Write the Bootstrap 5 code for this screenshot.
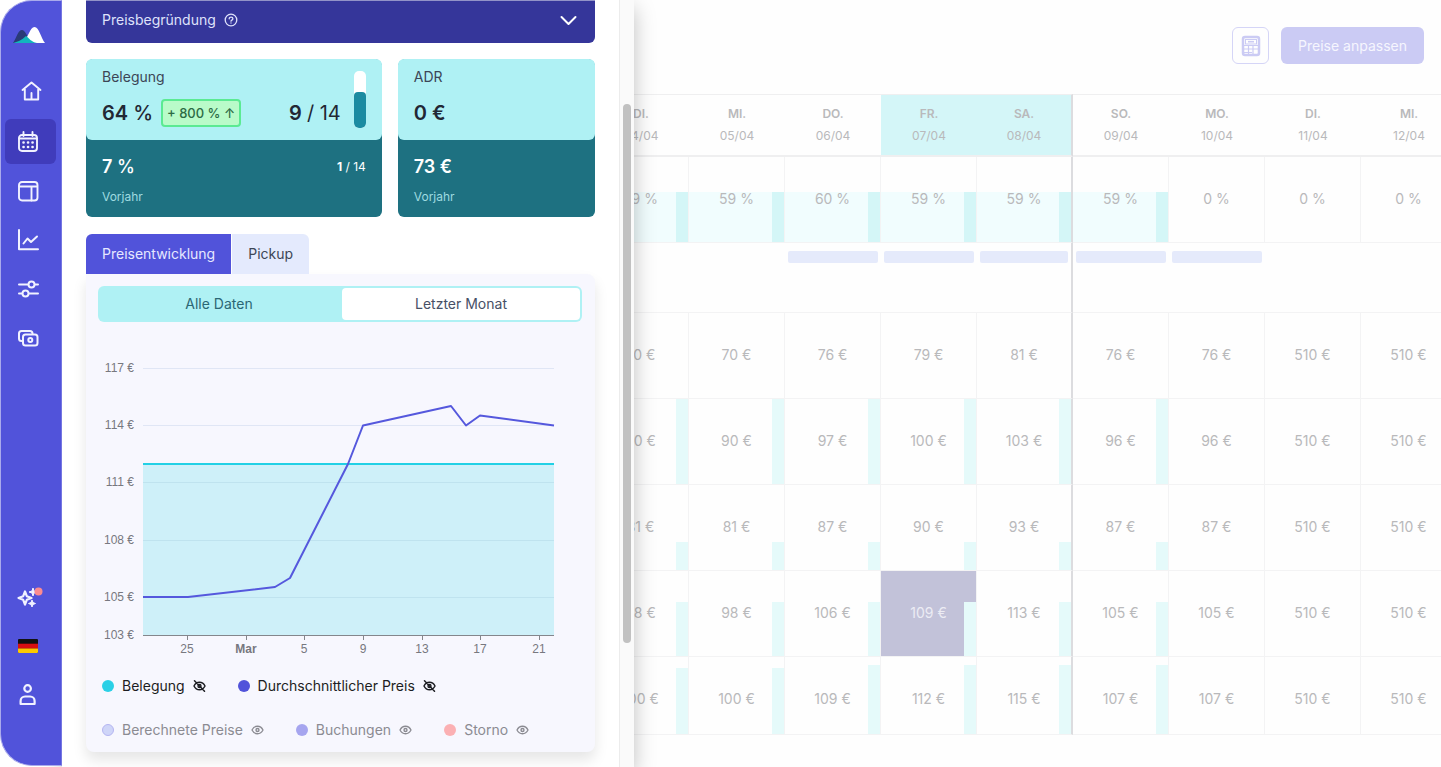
<!DOCTYPE html>
<html lang="de">
<head>
<meta charset="utf-8">
<meta name="viewport" content="width=device-width, initial-scale=1">
<title>Preiskalender</title>
<link href="https://cdn.jsdelivr.net/npm/bootstrap@5.3.0/dist/css/bootstrap.min.css" rel="stylesheet">
<style>
:root { --indigo: #5153da; --aqua: #aff1f4; --petrol: #1e7181; --line: #f3f3f4; }
body { font-family: Inter, "Liberation Sans", sans-serif; font-size: 14px; line-height: 20px; background: #fff; color: #343a46; }
.app { height: 100vh; }

/* Icon rail */
.rail { position: relative; z-index: 3; flex: 0 0 62px; background: var(--indigo); border: 1px solid #a9aaec; border-right-color: #7576e2; border-radius: 32px 0 0 32px; padding: 24px 5px 48px 4px; margin-bottom: 1px; }
.rail a { display: flex; align-items: center; height: 45px; padding-left: 13px; border-radius: 6px; color: #f1f2ff; }
.rail a.active { background: #403cbb; }
.rail .logo { height: 20px; padding-left: 8px; margin-bottom: 25px; }
.rail svg { overflow: visible; }
.stroke { fill: none; stroke: currentColor; stroke-width: 2; stroke-linecap: round; stroke-linejoin: round; }

/* Drawer */
.drawer { flex: 0 0 572px; z-index: 2; background: #fff; box-shadow: 0 8px 20px rgba(0,0,0,.25); }
.drawer-body { padding: 0 24px; gap: 16px; min-width: 0; }
.scroll-track { flex: 0 0 15px; display: grid; grid-template-rows: 104fr 539fr 124fr; padding: 0 3px; background: #fafafa; border-left: 1px solid #ececec; }
.scroll-thumb { grid-row: 2; background: #c1c1c1; border-radius: 4px; }
.reason { height: 43px; padding: 0 16px 5px; background: #35369a; color: #dfe2fb; border: 0; border-top: 1px solid #9293c8; border-radius: 0 0 6px 6px; font-size: 14px; }
.stat { background: var(--petrol); border-radius: 8px 8px 6px 6px; color: #fff; }
.stat-wide { flex: 3 1 0; }
.stat-slim { flex: 2 1 0; }
.stat-now { background: var(--aqua); color: #222834; border-radius: 6px; height: 81px; padding: 8px 16px; }
.stat-prev { height: 77px; padding: 15px 16px 8px; }
.stat-title { color: #3c4656; }
.big { font-size: 20px; line-height: 28px; font-weight: 600; }
.mid { font-size: 18px; line-height: 24px; font-weight: 600; }
.unit { font-weight: 500; }
.note { font-size: 12px; line-height: 16px; }
.stat-prev .note-soft { color: #9fdbe0; margin-top: 10px; }
.delta { border: 2px solid #5bea92; background: #b9fbc9; color: #2c6b45; border-radius: 4px; padding: 2px 4px; margin-left: 8px; font-size: 13px; line-height: 20px; font-weight: 500; }
.gauge { width: 12px; height: 57px; border-radius: 5px; background: #fff; overflow: hidden; margin-left: 13px; }
.gauge div { background: #1b8ba1; border-radius: 4px; }
.tabs { gap: 1px; padding-top: 1px; }
.tabs button { border: 0; height: 40px; font-size: 14px; padding: 0 16px; background: #e4eafd; color: #3c4656; border-radius: 0 6px 0 0; }
.tabs button.active { background: var(--indigo); color: #e6e8ff; border-radius: 6px 0 0 0; }
.panel-box { background: #f7f7fe; border-radius: 0 8px 8px 8px; padding: 12px 12px 0; box-shadow: 0 8px 14px rgba(0,0,0,.1); }
.range { background: var(--aqua); border-radius: 6px; padding: 2px; gap: 4px; height: 36px; margin-right: 1px; }
.range button { flex: 1 1 0; border: 0; background: none; color: #2b6774; border-radius: 4px; font-size: 14px; }
.range button.active { background: #fff; color: #475066; }
.chart { display: block; width: 100%; margin-top: 18px; }
.chart text { font-family: "Liberation Sans", sans-serif; font-size: 12px; fill: #77787f; }
.legend-row { gap: 32px; padding-left: 4px; height: 44px; }
.legend-row button { display: flex; align-items: center; gap: 8px; padding: 0; border: 0; background: none; font-size: 14px; color: #1c1d22; }
.legend-row.off button { color: #8b8b92; }
.dot { width: 12px; height: 12px; border-radius: 50%; }
.dot-occ { background: #2bd0e6; }
.dot-avg { background: #5153da; }
.dot-calc { background: #cfd5f8; border: 1px solid #b5b5f2; }
.dot-book { background: #a6a5ef; }
.dot-canc { background: #fbb0b3; }

/* Calendar: runs on beneath the drawer */
.calendar { margin-left: -41px; background: #fefefe; overflow: hidden; }
.toolbar { height: 94px; padding-right: 17px; gap: 12px; padding-bottom: 3px; }
.btn-calc { width: 37px; height: 37px; padding: 0; border: 1px solid #d5d5f7; border-radius: 6px; background: #fefefe; color: #cbcbf4; }
.btn-price { height: 37px; padding: 0 17px; border: 0; border-radius: 6px; background: #cbcbf4; color: #f6f6fe; font-size: 14px; }
.grid { width: 864px; table-layout: fixed; border-collapse: separate; border-spacing: 0; text-align: center; color: #b9b9bb; }
.grid th, .grid td { position: relative; padding: 0; border: 0 solid var(--line); border-width: 0 1px 1px 0; font-weight: 400; }
.grid thead th { height: 63px; border-width: 1px 0 2px; border-color: #efeff0; font-size: 12px; line-height: 22px; }
.grid thead b { font-weight: 600; display: block; }
.grid thead .weekend { background: #d4f6f8; }
.grid .sat { border-right: 2px solid #dcdcdf !important; }
.grid .occ td, .grid .price td { height: 86px; padding-bottom: 1px; }
.grid .price.last td { height: 78px; padding-top: 8px; }
.grid .events td { height: 70px; border-right-width: 0; padding: 8px 3px 0; vertical-align: top; }
.event { height: 12px; border-radius: 2px; background: #e5eafb; }
.grid .lvl::before { content: ""; position: absolute; right: 0; bottom: 0; width: 12px; height: var(--lvl); background: #e5fafa; }
.grid .occ .lvl::before { width: 100%; background: linear-gradient(to left, #d4f6f7 12px, #f1fdfe 12px); }
.grid span { position: relative; }
.grid td.picked { background: #c2c2d9; color: #ececf4; }
</style>
</head>
<body>
<div class="app d-flex overflow-hidden">

  <nav class="rail d-flex flex-column" aria-label="Hauptnavigation">
    <a class="logo" href="#" aria-label="Startseite">
      <svg width="32" height="18" viewBox="0 0 32 18"><path d="M0 17C4 11 5 4 9 4c3 0 6 8 11 13z" fill="#2a3a78"/><path d="M10 17C15 12 17 1 21.500 1S28 12 32 17z" fill="#fff"/><path d="M0 17c4-1 9-3 13-7 3 2 5 6 11 7z" fill="#12b5bd"/></svg>
    </a>
    <a class="pb-1" href="#" aria-label="Übersicht"><svg class="stroke ms-1" width="20" height="20" viewBox="0 0 20 20"><path d="M0.500 9 9.500 1.500 18.500 9M2.800 8v10.500h13.400V8M9.500 18v-6" stroke-width="1.900"/></svg></a>
    <a class="active mt-1" href="#" aria-label="Kalender"><svg class="stroke" width="20" height="20" viewBox="0 0 20 20"><rect x="1" y="3" width="18" height="16" rx="3" stroke-width="1.900"/><path d="M1 6.500h18M5.500 0v4M14.500 0v4" stroke-width="1.900"/><path d="M5.500 10.500h.1M10 10.500h.1M14.500 10.500h.1M5.500 15h.1M10 15h.1M14.500 15h.1" stroke-width="2.600"/></svg></a>
    <a class="mt-1" href="#" aria-label="Ansicht"><svg class="stroke" width="20" height="20" viewBox="0 0 20 20"><rect x="1" y="1" width="18.500" height="18.500" rx="3" stroke-width="1.900"/><path d="M1 5.500h18M13.500 5.500v14" stroke-width="1.900"/></svg></a>
    <a class="mt-1" href="#" aria-label="Statistik"><svg class="stroke" width="20" height="20" viewBox="0 0 20 20"><path d="M1 0v19.200h19M5.500 13.500l4-5 3.500 3.500 6-5.500"/></svg></a>
    <a class="mt-1" href="#" aria-label="Einstellungen"><svg class="stroke" width="20" height="20" viewBox="0 0 20 20"><path d="M1 5.500h9M17 5.500h3M1 14.500h3M11 14.500h9"/><circle cx="13.500" cy="5.500" r="3"/><circle cx="7.500" cy="14.500" r="3"/></svg></a>
    <a class="mt-1" href="#" aria-label="Umsatz"><svg class="stroke" width="20" height="20" viewBox="0 0 20 20"><path d="M3.500 13C2 13 1 12 1 10.500V5.500C1 4 2 3 3.500 3H12c1.500 0 2.500 1 2.500 2.500" stroke-width="2"/><rect x="5" y="6.500" width="14.500" height="11" rx="2.500" stroke-width="2"/><circle cx="12.300" cy="12" r="2" stroke-width="2"/></svg></a>
    <a class="mt-auto" href="#" aria-label="Neuigkeiten"><svg width="24" height="20" viewBox="0 0 24 20" fill="none" stroke="currentColor" stroke-width="2.200" stroke-linejoin="round"><path d="M7 4.500l1.800 4.700L13.500 11l-4.700 1.800L7 17.500l-1.800-4.700L.5 11l4.700-1.800z"/><path d="M14 13l1 2.500 2.500 1L15 17.500 14 20l-1-2.500-2.500-1 2.500-1z" fill="currentColor" stroke-width="1"/><path d="M15 1l1 3 3 1-3 1-1 3-1-3-3-1 3-1z" fill="currentColor" stroke-width="1"/><circle cx="20.500" cy="4.500" r="4" fill="#fb8b90" stroke="none"/></svg></a>
    <a class="mt-1" href="#" aria-label="Sprache: Deutsch"><svg width="20" height="14" viewBox="0 0 20 14"><rect width="20" height="14" rx="1" fill="#111"/><path d="M0 4.700h20v5H0z" fill="#d80f12"/><path d="M0 9.500h20V13a1 1 0 0 1-1 1H1a1 1 0 0 1-1-1z" fill="#fdc900"/></svg></a>
    <a class="mt-1" href="#" aria-label="Profil"><svg class="stroke" width="20" height="22" viewBox="0 0 20 22"><circle cx="9.600" cy="4.500" r="3.300" stroke-width="2.200"/><path d="M2.600 20v-3a4.500 4.500 0 0 1 4.500-4.500h5a4.500 4.500 0 0 1 4.500 4.500v3z" stroke-width="2.200"/></svg></a>
  </nav>

  <aside class="drawer d-flex">
    <div class="drawer-body d-flex flex-column flex-fill overflow-hidden">
      <button type="button" class="reason d-flex align-items-center w-100 flex-shrink-0">
        Preisbegründung
        <svg class="stroke ms-2" width="14" height="14" viewBox="0 0 14 14"><circle cx="7" cy="7" r="5.800" stroke-width="1.300"/><path d="M5.200 5.800c0-2.400 3.700-2.300 3.700 0 0 1.300-1.900 1.300-1.900 2.400M7 10v.1" stroke-width="1.300"/></svg>
        <svg class="stroke ms-auto text-white" width="20" height="20" viewBox="0 0 20 20"><path d="M2.500 7l7 7 7-7"/></svg>
      </button>

      <div class="d-flex gap-3">
        <section class="stat stat-wide">
          <div class="stat-now d-flex">
            <div class="flex-fill">
              <div class="stat-title">Belegung</div>
              <div class="d-flex align-items-center mt-2 pt-1">
                <span class="big">64 <span class="unit">%</span></span><span class="delta">+ 800 % ↑</span>
                <span class="big ms-auto">9 <span class="fw-normal">/ 14</span></span>
              </div>
            </div>
            <div class="gauge d-flex flex-column justify-content-end mt-1"><div style="height:64%"></div></div>
          </div>
          <div class="stat-prev">
            <div class="d-flex align-items-center justify-content-between"><span class="mid">7 <span class="unit">%</span></span><span class="note"><b>1</b> / 14</span></div>
            <div class="note note-soft">Vorjahr</div>
          </div>
        </section>
        <section class="stat stat-slim">
          <div class="stat-now">
            <div class="stat-title">ADR</div>
            <div class="big mt-2 pt-1">0 €</div>
          </div>
          <div class="stat-prev">
            <div class="mid">73 €</div>
            <div class="note note-soft">Vorjahr</div>
          </div>
        </section>
      </div>

      <section>
        <div class="tabs d-flex" role="tablist">
          <button type="button" class="active" role="tab" aria-selected="true">Preisentwicklung</button>
          <button type="button" role="tab" aria-selected="false">Pickup</button>
        </div>
        <div class="panel-box">
          <div class="range d-flex">
            <button type="button">Alle Daten</button>
            <button type="button" class="active">Letzter Monat</button>
          </div>

          <svg class="chart" viewBox="0 0 485 324" role="img" aria-label="Preisentwicklung">
            <path d="M45 124H456V295H45z" fill="#cef0f9"/>
            <path d="M45 28.500H456M45 85.500H456" stroke="#e0e6f5"/>
            <path d="M45 142.500H456M45 200.500H456M45 257.500H456" stroke="#bfe3ef"/>
            <path d="M45 124H456" stroke="#22d0e5" stroke-width="2"/>
            <path d="M45 257H90L177 247 192 238 250 124 265 85.500 353 66 368 85.500 382 75.500 456 85.500" fill="none" stroke="#5558dd" stroke-width="2" stroke-linejoin="round"/>
            <path d="M45 295.500H456M89.500 296v4M148.500 296v4M206.500 296v4M265.500 296v4M324.500 296v4M382.500 296v4M441.500 296v4" stroke="#84868c"/>
            <g text-anchor="end"><text x="36" y="32">117 €</text><text x="36" y="89">114 €</text><text x="36" y="146">111 €</text><text x="36" y="204">108 €</text><text x="36" y="261">105 €</text><text x="36" y="299">103 €</text></g>
            <g text-anchor="middle"><text x="89" y="313">25</text><text x="148" y="313" font-weight="700">Mar</text><text x="206" y="313">5</text><text x="265" y="313">9</text><text x="324" y="313">13</text><text x="382" y="313">17</text><text x="441" y="313">21</text></g>
          </svg>

          <div class="legend-row d-flex">
            <button type="button"><span class="dot dot-occ"></span>Belegung<svg class="stroke" width="13" height="12" viewBox="0 0 13 12"><path d="M1 6c2.500-5 8.500-5 11 0-2.500 5-8.500 5-11 0zM1.500.8l10 10.400" stroke-width="1.500"/><circle cx="6.500" cy="6" r="1.500" stroke-width="1.400"/></svg></button>
            <button type="button"><span class="dot dot-avg"></span>Durchschnittlicher Preis<svg class="stroke" width="13" height="12" viewBox="0 0 13 12"><path d="M1 6c2.500-5 8.500-5 11 0-2.500 5-8.500 5-11 0zM1.500.8l10 10.400" stroke-width="1.500"/><circle cx="6.500" cy="6" r="1.500" stroke-width="1.400"/></svg></button>
          </div>
          <div class="legend-row off d-flex">
            <button type="button"><span class="dot dot-calc"></span>Berechnete Preise<svg class="stroke" width="13" height="12" viewBox="0 0 13 12"><path d="M1 6c2.500-5 8.500-5 11 0-2.500 5-8.500 5-11 0z" stroke-width="1.300"/><circle cx="6.500" cy="6" r="1.500" stroke-width="1.400"/></svg></button>
            <button type="button"><span class="dot dot-book"></span>Buchungen<svg class="stroke" width="13" height="12" viewBox="0 0 13 12"><path d="M1 6c2.500-5 8.500-5 11 0-2.500 5-8.500 5-11 0z" stroke-width="1.300"/><circle cx="6.500" cy="6" r="1.500" stroke-width="1.400"/></svg></button>
            <button type="button"><span class="dot dot-canc"></span>Storno<svg class="stroke" width="13" height="12" viewBox="0 0 13 12"><path d="M1 6c2.500-5 8.500-5 11 0-2.500 5-8.500 5-11 0z" stroke-width="1.300"/><circle cx="6.500" cy="6" r="1.500" stroke-width="1.400"/></svg></button>
          </div>
        </div>
      </section>
    </div>
    <div class="scroll-track"><div class="scroll-thumb"></div></div>
  </aside>

  <main class="calendar flex-fill">
    <div class="toolbar d-flex align-items-center justify-content-end">
      <button type="button" class="btn-calc d-flex align-items-center justify-content-center" aria-label="Rechner">
        <svg width="20" height="22" viewBox="0 0 20 22" fill="none" stroke="currentColor"><rect x="2" y="2" width="16" height="18" rx="2" stroke-width="2.500"/><rect x="4.500" y="4.500" width="11" height="4.500" stroke-width="1"/><path d="M7 6.700h6" stroke-width="1.600"/><path d="M3 10.500h14M3 14h14M3 17.500h8M7.500 10v9M12 10v9" stroke-width="1.200"/></svg>
      </button>
      <button type="button" class="btn-price">Preise anpassen</button>
    </div>
    <table class="grid">
      <thead>
        <tr>
          <th><b>DI.</b>04/04</th><th><b>MI.</b>05/04</th><th><b>DO.</b>06/04</th><th class="weekend"><b>FR.</b>07/04</th><th class="weekend sat"><b>SA.</b>08/04</th><th><b>SO.</b>09/04</th><th><b>MO.</b>10/04</th><th><b>DI.</b>11/04</th><th><b>MI.</b>12/04</th>
        </tr>
      </thead>
      <tbody>
        <tr class="occ" style="--lvl:59%">
          <td class="lvl"><span>59 %</span></td><td class="lvl"><span>59 %</span></td><td class="lvl"><span>60 %</span></td><td class="lvl"><span>59 %</span></td><td class="lvl sat"><span>59 %</span></td><td class="lvl"><span>59 %</span></td><td>0 %</td><td>0 %</td><td>0 %</td>
        </tr>
        <tr class="events">
          <td></td><td></td><td><div class="event"></div></td><td><div class="event"></div></td><td class="sat"><div class="event"></div></td><td><div class="event"></div></td><td><div class="event"></div></td><td></td><td></td>
        </tr>
        <tr class="price">
          <td>70 €</td><td>70 €</td><td>76 €</td><td>79 €</td><td class="sat">81 €</td><td>76 €</td><td>76 €</td><td>510 €</td><td>510 €</td>
        </tr>
        <tr class="price" style="--lvl:100%">
          <td class="lvl">90 €</td><td class="lvl">90 €</td><td class="lvl">97 €</td><td class="lvl">100 €</td><td class="lvl sat">103 €</td><td class="lvl">96 €</td><td>96 €</td><td>510 €</td><td>510 €</td>
        </tr>
        <tr class="price" style="--lvl:33%">
          <td class="lvl">81 €</td><td class="lvl">81 €</td><td class="lvl">87 €</td><td class="lvl">90 €</td><td class="lvl sat">93 €</td><td class="lvl">87 €</td><td>87 €</td><td>510 €</td><td>510 €</td>
        </tr>
        <tr class="price" style="--lvl:64%">
          <td class="lvl">98 €</td><td class="lvl">98 €</td><td class="lvl">106 €</td><td class="lvl picked">109 €</td><td class="lvl sat">113 €</td><td class="lvl">105 €</td><td>105 €</td><td>510 €</td><td>510 €</td>
        </tr>
        <tr class="price last" style="--lvl:89%">
          <td class="lvl" style="--lvl:86%">100 €</td><td class="lvl" style="--lvl:86%">100 €</td><td class="lvl">109 €</td><td class="lvl">112 €</td><td class="lvl sat">115 €</td><td class="lvl">107 €</td><td>107 €</td><td>510 €</td><td>510 €</td>
        </tr>
      </tbody>
    </table>
  </main>
</div>
<script src="https://cdn.jsdelivr.net/npm/bootstrap@5.3.0/dist/js/bootstrap.bundle.min.js"></script>
</body>
</html>
